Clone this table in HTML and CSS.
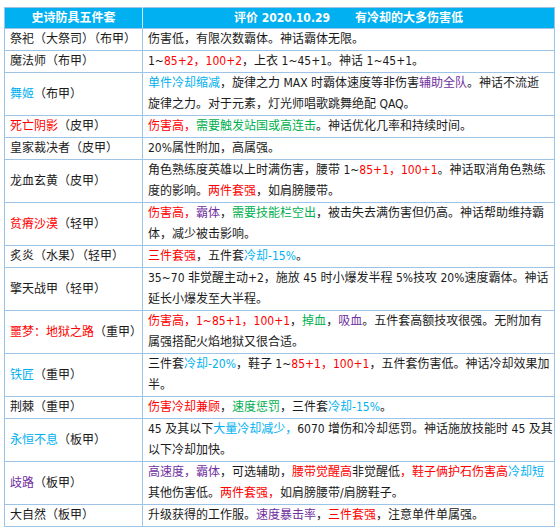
FILE: index.html
```html
<!DOCTYPE html>
<html lang="zh">
<head>
<meta charset="utf-8">
<title>史诗防具五件套</title>
<link rel="stylesheet" href="styles.css">
</head>
<body>
<table class="sheet">
  <colgroup><col class="c-name"><col class="c-desc"></colgroup>
  <thead>
    <tr>
      <th>史诗防具五件套</th>
      <th>评价 2020.10.29<span class="gap">有冷却的大多伤害低</span></th>
    </tr>
  </thead>
  <tbody>
    <tr><td class="name">祭祀（大祭司）（布甲）</td><td class="desc">伤害低，有限次数霸体。神话霸体无限。</td></tr>
    <tr><td class="name">魔法师（布甲）</td><td class="desc">1~<span class="r">85+2，100+2</span>，上衣 1~45+1。神话 1~45+1。</td></tr>
    <tr><td class="name"><span class="b">舞姬</span>（布甲）</td><td class="desc"><span class="b">单件冷却缩减</span>，旋律之力 MAX 时霸体速度等非伤害<span class="p">辅助全队</span>。神话不流逝<br>旋律之力。对于元素，灯光师唱歌跳舞绝配 QAQ。</td></tr>
    <tr><td class="name"><span class="r">死亡阴影</span>（皮甲）</td><td class="desc"><span class="r">伤害高，</span><span class="g">需要触发站国或高连击</span>。神话优化几率和持续时间。</td></tr>
    <tr><td class="name">皇家裁决者（皮甲）</td><td class="desc">20%属性附加，高属强。</td></tr>
    <tr><td class="name">龙血玄黄（皮甲）</td><td class="desc">角色熟练度英雄以上时满伤害，腰带 1~<span class="r">85+1，100+1</span>。神话取消角色熟练<br>度的影响。<span class="r">两件套强</span>，如肩膀腰带。</td></tr>
    <tr><td class="name"><span class="r">贫瘠沙漠</span>（轻甲）</td><td class="desc"><span class="r">伤害高，</span><span class="p">霸体</span>，<span class="g">需要技能栏空出</span>，被击失去满伤害但仍高。神话帮助维持霸<br>体，减少被击影响。</td></tr>
    <tr><td class="name">炙炎（水果）（轻甲）</td><td class="desc"><span class="r">三件套强</span>，五件套<span class="b">冷却-15%</span>。</td></tr>
    <tr><td class="name">擎天战甲（轻甲）</td><td class="desc">35~70 非觉醒主动+2，施放 45 时小爆发半程 5%技攻 20%速度霸体。神话<br>延长小爆发至大半程。</td></tr>
    <tr><td class="name"><span class="r">噩梦：地狱之路</span>（重甲）</td><td class="desc"><span class="r">伤害高，1~85+1，100+1</span>，<span class="g">掉血</span>，<span class="p">吸血</span>。五件套高额技攻很强。无附加有<br>属强搭配火焰地狱又很合适。</td></tr>
    <tr><td class="name"><span class="b">铁匠</span>（重甲）</td><td class="desc">三件套<span class="b">冷却-20%</span>，鞋子 1~<span class="r">85+1，100+1</span>，五件套伤害低。神话冷却效果加<br>半。</td></tr>
    <tr><td class="name">荆棘（重甲）</td><td class="desc"><span class="r">伤害冷却兼顾</span>，<span class="g">速度惩罚</span>，三件套<span class="b">冷却-15%</span>。</td></tr>
    <tr><td class="name"><span class="b">永恒不息</span>（板甲）</td><td class="desc">45 及其以下<span class="b">大量冷却减少，</span>6070 增伤和冷却惩罚。神话施放技能时 45 及其<br>以下冷却加快。</td></tr>
    <tr><td class="name"><span class="p">歧路</span>（板甲）</td><td class="desc"><span class="p">高速度，霸体</span>，可选辅助，<span class="r">腰带觉醒高</span>非觉醒低<span class="r">，鞋子俩护石伤害高</span><span class="b">冷却短</span><br>其他伤害低。<span class="r">两件套强，</span>如肩膀腰带/肩膀鞋子。</td></tr>
    <tr><td class="name">大自然（板甲）</td><td class="desc">升级获得的工作服。<span class="p">速度暴击率</span>，<span class="r">三件套强</span>，注意单件单属强。</td></tr>
  </tbody>
</table>
</body>
</html>
```

FILE: styles.css
```css
html, body {
  margin: 0;
  padding: 0;
  background: #ffffff;
}
body {
  padding: 7px 0 0 4px;
  font-family: "DejaVu Sans Condensed", "DejaVu Sans", "Noto Sans CJK SC", sans-serif;
  font-stretch: condensed;
  font-size: 12px;
  color: #1a1a1a;
}
.sheet {
  border-collapse: collapse;
  table-layout: fixed;
  width: 550px;
}
.c-name { width: 138px; }
.c-desc { width: 412px; }
.sheet th {
  background: #00b0f0;
  color: #ffffff;
  font-weight: bold;
  line-height: 20px;
  padding: 0;
  text-align: center;
  border: 1px solid #9dc3e6;
  border-right-color: #cfe6f7;
}
.sheet th:last-child { border-right-color: #9dc3e6; }
.gap { margin-left: 25px; }
.sheet td {
  border: 1px solid #9dc3e6;
  line-height: 21px;
  padding: 0 5px;
  vertical-align: top;
  white-space: nowrap;
}
.sheet td.name {
  vertical-align: middle;
}
.sheet td.desc {
  padding: 0 0 0 5px;
  overflow: hidden;
}
.r { color: #ff0000; }
.g { color: #00b050; }
.b { color: #00b0f0; }
.p { color: #7030a0; }
```
